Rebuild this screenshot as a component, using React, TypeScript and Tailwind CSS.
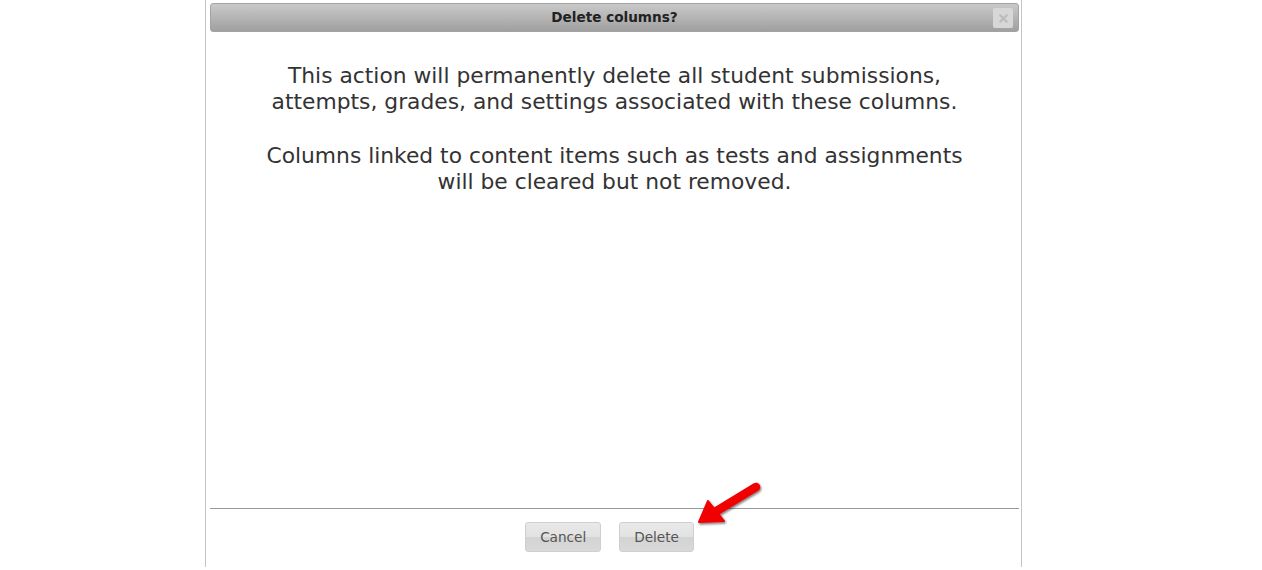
import { X } from 'lucide-react'

const font = { fontFamily: '"DejaVu Sans", Verdana, sans-serif' }

function DialogButton({ label }: { label: string }) {
  return (
    <button
      className="h-[30px] rounded-[3px] border border-[#cfcfcf] bg-[linear-gradient(#e9e9e9_0%,#e2e2e2_50%,#d3d3d3_50%,#d9d9d9_100%)] px-[14px] text-[13.6px] text-[#555]"
      style={font}
    >
      {label}
    </button>
  )
}

function Arrow() {
  return (
    <svg className="absolute left-[695px] top-[474px]" width="72" height="58" viewBox="0 0 72 58">
      <defs>
        <filter id="shadow" x="-20%" y="-20%" width="140%" height="140%">
          <feDropShadow dx="1" dy="1.5" stdDeviation="1.2" floodColor="#000" floodOpacity="0.55" />
        </filter>
      </defs>
      <g filter="url(#shadow)" fill="#f00000" stroke="#f00000">
        <line x1="61" y1="13" x2="20" y2="38" strokeWidth="8.5" strokeLinecap="round" />
        <polygon points="4,48 13,27 29,47" strokeWidth="2" strokeLinejoin="round" />
      </g>
    </svg>
  )
}

export default function App() {
  return (
    <div className="relative h-[570px] w-[1262px] bg-white" style={font}>
      <div className="ml-[205px] flex h-[567px] w-[817px] flex-col border-x border-[#c4c4c4] pl-[4px] pr-[2px] pt-[3px]">
        <div className="relative flex h-[29px] items-center justify-center rounded-[3px] border border-[#a3a3a3] bg-[linear-gradient(#c9c9c9,#a0a0a0)]">
          <span className="text-[13.6px] font-bold text-[#222]">Delete columns?</span>
          <span className="absolute right-[5px] top-[4px] flex h-[20px] w-[20px] items-center justify-center rounded-[2px] bg-[#d7d7d7]">
            <X className="h-[13px] w-[13px] text-[#bbb]" strokeWidth={4} />
          </span>
        </div>

        <div className="flex flex-1 flex-col items-center gap-[28px] pt-[31px] text-center text-[21.8px] leading-[26px] text-[#333]">
          <p>
            This action will permanently delete all student submissions,
            <br />
            attempts, grades, and settings associated with these columns.
          </p>
          <p>
            Columns linked to content items such as tests and assignments
            <br />
            will be cleared but not removed.
          </p>
        </div>

        <div className="h-px bg-[#999]" />
        <div className="flex h-[58px] items-start justify-center gap-[18px] pr-[10px] pt-[13px]">
          <DialogButton label="Cancel" />
          <DialogButton label="Delete" />
        </div>
      </div>
      <Arrow />
    </div>
  )
}
